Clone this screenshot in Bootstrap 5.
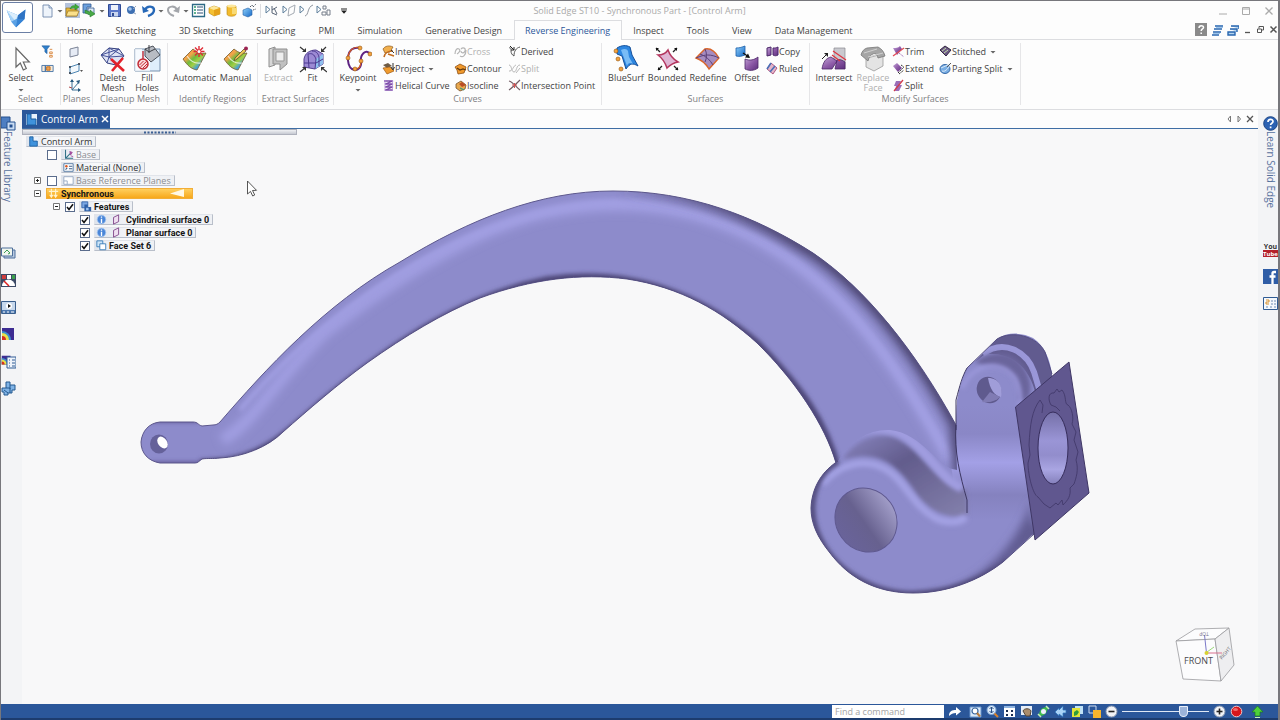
<!DOCTYPE html>
<html lang="en">
<head>
<meta charset="utf-8">
<meta name="viewport" content="width=device-width, initial-scale=1">
<title>Solid Edge ST10 - Synchronous Part - [Control Arm]</title>
<link href="https://cdn.jsdelivr.net/npm/bootstrap@5.3.0/dist/css/bootstrap.min.css" rel="stylesheet">
<style>
:root{--blue:#2b579a;--ink:#444;--line:#dcdde0}
body{font-family:"Open Sans","Noto Sans",sans-serif;font-size:9px;line-height:10px;color:var(--ink);background:#fdfdfd;border:1px solid #77777c;border-right-width:2px;border-bottom:0}
button{background:none;border:0;padding:0;color:inherit;font:inherit}
svg{display:block;flex:none}
a{color:inherit;text-decoration:none}
.s6{width:6px;height:6px}.s11{width:11px;height:11px}.s13{width:13px;height:13px}.s15{width:15px;height:15px}.s28{width:28px;height:28px}
.applogo{left:1px;top:1px;width:31px;height:31px;border:1px solid #6b7fa5;border-radius:3px;background:#fff}
.titlerow{display:grid;grid-template-columns:1fr auto 1fr;height:19px}
.qat{padding-left:39px;gap:2px}
.qat .on{background:#b4c3dc}
.vsep{width:1px;height:14px;background:var(--line);margin:0 2px 0 1px}
.caption{color:#aaa}
.winctl{color:#aaa;gap:9px}
.tabs{height:20px;padding-left:55px;border-bottom:1px solid var(--line)}
.tabs .nav-link{color:var(--ink);padding:0 12px 0 11px;height:20px;line-height:21px}
.tabs .nav-link.active{color:var(--blue);background:#fdfdfd;border:1px solid var(--line);border-bottom:0;padding:0 11px 0 10px;line-height:20px}
.ribbon{height:70px;padding:3px 0;border-bottom:1px solid var(--line)}
.grp{border-right:1px solid #e6e6e8;height:62px}
.grpbody{height:51px}
.grpname{color:#808083;text-align:center}
.big{padding-top:2px;white-space:nowrap}
.row17{height:17px;white-space:nowrap}
.off{color:#b0b0b0}
.w30{width:30px}.w34{width:34px}.w38{width:38px}.w40{width:40px}.w42{width:42px}.w44{width:44px}
.g60{width:60px}.g32{width:32px}.g75{width:75px}.g90{width:90px}.g76{width:76px}.g268{width:268px}.g208{width:208px}.g211{width:211px}
.c72{width:72px}.c54{width:54px}.c47{width:47px}
.side{width:21px;background:#f3f4f6;padding-top:6px}
.side.right{width:20px}
.side .vert{writing-mode:vertical-rl;font-size:10px;line-height:13px;color:#56709c}
.side .lead-item{margin-bottom:44px}
.side.right .lead-item{margin-bottom:34px}
.tools{gap:12px}
.doctabs{height:19px;border-bottom:1px solid #3f6ea5;background:#fdfdfd}
.doctab{background:var(--blue);color:#fff;width:88px;font-size:10px;padding:0 3px;gap:3px;white-space:nowrap}
.view{background:#f8f8f9}
.grip{width:275px;height:6px;border:1px solid #aeb1bc;background:linear-gradient(#f0f1f4,#c6c9d2)}
.tree{padding-left:4px}
.trow{height:13px}
.node{height:11px;border:1px solid #b9bfca;border-left-color:#e1e4ea;border-top-color:#e1e4ea;background:linear-gradient(90deg,#dfe4ec,#f8f9fb 40%,#eef0f4);padding:0 3px 0 1px;gap:2px;color:#333}
.node.dim{color:#8b8d92}
.node.strong{font-family:Roboto,"Open Sans",sans-serif;font-weight:700;color:#151515}
.node.sync{width:147px;background:linear-gradient(#ffcf5e,#f7a81b);border-color:#f2ae37}
.node.two{gap:4px}
.i1{margin-left:21px}.i2{margin-left:35px}.i3{margin-left:8px}.i4{margin-left:27px}.i5{margin-left:54px}
.tree input[type=checkbox]{appearance:none;width:10px;height:10px;border:1px solid #5a6c8c;background:#fff;margin:0 4px 0 0;border-radius:0}
.tree input[type=checkbox]:checked{background:#fff url("data:image/svg+xml,%3Csvg xmlns='http://www.w3.org/2000/svg' viewBox='0 0 8 8'%3E%3Cpath d='M1 4l2 2.4L7 1.2' fill='none' stroke='%23111' stroke-width='1.6'/%3E%3C/svg%3E") center/8px}
.pm{width:7px;height:7px;margin-right:6px}
.pm.near{margin-right:5px}
.status{height:16px;background:var(--blue);border-bottom:2px solid #1d3c6e;gap:4px;padding-right:14px}
.find{width:112px;height:13px;border:0;padding:0 3px;font:inherit;color:#333;background:#fff}
.find::placeholder{color:#a5a5a5;opacity:1}
.zoomer{appearance:none;width:87px;height:12px;margin:0;background:linear-gradient(#dfe8f5,#dfe8f5) center/100% 1px no-repeat}
.zoomer::-webkit-slider-thumb{appearance:none;width:9px;height:11px;background:#9cb4da;border:1px solid #e9effa;border-radius:1px 1px 5px 5px}
</style>
</head>
<body class="vh-100 d-flex flex-column overflow-hidden">

<svg width="0" height="0" class="position-absolute" aria-hidden="true">
<defs>
<linearGradient id="purp" x1="0" y1="0" x2="1" y2="1"><stop offset="0" stop-color="#c3a6d6"/><stop offset=".5" stop-color="#8e5ba8"/><stop offset="1" stop-color="#5d2f7d"/></linearGradient>
<linearGradient id="rain" x1="0" y1="0" x2="1" y2="1"><stop offset="0" stop-color="#f59a3c"/><stop offset=".3" stop-color="#f2a34a"/><stop offset=".45" stop-color="#6dbb3e"/><stop offset=".6" stop-color="#a5cf45"/><stop offset=".75" stop-color="#3f9fe0"/><stop offset="1" stop-color="#7db7ec"/></linearGradient>
<linearGradient id="bl" x1="0" y1="0" x2="1" y2="1"><stop offset="0" stop-color="#8fd0fa"/><stop offset="1" stop-color="#1668c6"/></linearGradient>
<symbol id="car" viewBox="0 0 6 6"><path d="M.5 2h5L3 4.6z" fill="#666"/></symbol>
<symbol id="new" viewBox="0 0 15 15"><path d="M3 2h6l3 3v9H3z" fill="#eef4fb" stroke="#7089ac" stroke-width=".9"/><path d="M9 2v3h3" fill="#cfdded" stroke="#7089ac" stroke-width=".8"/></symbol>
<symbol id="open" viewBox="0 0 15 15"><path d="M1 5h4l1 1h6v7H1z" fill="#e3b53b" stroke="#9a7421" stroke-width=".7"/><path d="M3 8h11l-2 5H1z" fill="#fbe08a" stroke="#9a7421" stroke-width=".7"/><path d="M5 6c1-3 3-4 5-3V1l4 3-4 3V5c-2-.4-3 0-5 1z" fill="#3fae3a" stroke="#1e7d21" stroke-width=".5"/></symbol>
<symbol id="arrowbox" viewBox="0 0 15 15"><path d="M1 1h8v3H5v6H1z" fill="#6fa2de" stroke="#31588f" stroke-width=".8"/><path d="M6 5h6v6H6z" fill="#dfeaf7" stroke="#31588f" stroke-width=".8"/><path d="M3 7l5 2V7l5 4-5 3v-2l-5-2z" fill="#49a947" stroke="#207523" stroke-width=".5"/></symbol>
<symbol id="save" viewBox="0 0 15 15"><path d="M1.500 1.500h12v12h-12z" fill="#5a77c9" stroke="#2f4b94"/><path d="M4 2h7v5H4z" fill="#eef2fa"/><path d="M4 9h7v4.500H4z" fill="#c9d5ee"/><path d="M5 10h2v3H5z" fill="#2f4b94"/></symbol>
<symbol id="ball" viewBox="0 0 15 15"><circle cx="7" cy="7" r="4" fill="#3d6fb2"/><circle cx="6" cy="6" r="1.800" fill="#a4c5ec"/><path d="M9 6l3-3M10 10l2 1" stroke="#96a5bb"/></symbol>
<symbol id="undo" viewBox="0 0 15 15"><path d="M4 7c2-5 9-4 9 0 0 3-3 5-6 6" fill="none" stroke="#2668b8" stroke-width="2.400"/><path d="M1 3l1 7 6-2z" fill="#2668b8"/></symbol>
<symbol id="redo" viewBox="0 0 15 15"><path d="M11 7C9 2 2 3 2 7c0 3 3 5 6 6" fill="none" stroke="#a3a6ab" stroke-width="2"/><path d="M14 3l-1 7-6-2z" fill="#a3a6ab"/></symbol>
<symbol id="list" viewBox="0 0 15 15"><path d="M1.500 1.500h12v12h-12z" fill="#fff" stroke="#2d6a86" stroke-width="1.300"/><path d="M3 4h2M3 7h2M3 10h2" stroke="#2d9c6c" stroke-width="1.600"/><path d="M6 4h6M6 7h6M6 10h6" stroke="#2b4e74"/></symbol>
<symbol id="box" viewBox="0 0 15 15"><path d="M1 5l5-2 6 2v6l-6 2-5-3z" fill="#f4c033" stroke="#b78412" stroke-width=".6"/><path d="M1 5l5-2 6 2-6 2z" fill="#fde79b"/><path d="M6 7v6l6-2V5z" fill="#e5a21a"/></symbol>
<symbol id="cyl" viewBox="0 0 15 15"><path d="M2 3h9v8c0 3-9 3-9 0z" fill="#f3bb2d" stroke="#b78412" stroke-width=".6"/><ellipse cx="6.500" cy="3" rx="4.500" ry="1.600" fill="#fde79b"/><path d="M7 5h5v6H7z" fill="#f8da75"/></symbol>
<symbol id="bluebox" viewBox="0 0 15 15"><path d="M1 7l5-2 4 2v5l-4 2-5-2z" fill="url(#bl)" stroke="#2a62a4" stroke-width=".6"/><path d="M8 4l2-2 1 2 3-3M11 7l3-1" stroke="#555d68" fill="none" stroke-dasharray="1.500 1"/></symbol>
<symbol id="tr" viewBox="0 0 15 15"><path d="M1 3v7l4-3.500z" fill="none" stroke="#5d7f9b"/></symbol>
<symbol id="q1" viewBox="0 0 15 15"><use href="#tr"/><path d="M7 3v7l5 2M7 7l5-3M9 5l3 6" fill="none" stroke="#596577"/></symbol>
<symbol id="q2" viewBox="0 0 15 15"><use href="#tr"/><path d="M7 5l6-3-1 8-6 3z" fill="none" stroke="#a4aab2"/></symbol>
<symbol id="q3" viewBox="0 0 15 15"><use href="#tr"/><path d="M6 13c4-1 2-9 8-11" fill="none" stroke="#8d939c"/></symbol>
<symbol id="q4" viewBox="0 0 15 15"><use href="#tr"/><path d="M7 3h3v3H7zM6 9h4v3H6zM11 7h3v5h-3z" fill="none" stroke="#777f8b"/></symbol>
<symbol id="qm" viewBox="0 0 6 6"><path d="M0 .5h6v1H0zM0 2.500h6L3 5.800z" fill="#222"/></symbol>
<symbol id="cursor" viewBox="0 0 28 28"><path d="M9 3v19l4.300-4 3 7 3-1.500-3-6.500h6z" fill="#fff" stroke="#666" stroke-width="1.200"/></symbol>
<symbol id="filter" viewBox="0 0 15 15"><path d="M1 1h9L7 5v5L4.500 8V5z" fill="#2f80cc" stroke="#1d5593" stroke-width=".6"/><path d="M10 5h3M10 8h3v2h-3zM10 12h3v2h-3z" stroke="#d88134" fill="none"/></symbol>
<symbol id="selbox" viewBox="0 0 15 15"><path d="M1 4h4v7H1zM5 4h9v7H5z" fill="#f8ead9" stroke="#3c6da3"/><path d="M6.500 5.500h4v4h-4z" fill="#f3a252" stroke="#b96918"/></symbol>
<symbol id="pl1" viewBox="0 0 15 15"><path d="M1 5l8-2v8l-8 2z" fill="#e6ebf5" stroke="#7b8396"/></symbol>
<symbol id="pl2" viewBox="0 0 15 15"><path d="M1 6l9-3v7l-9 3z" fill="#f3f8fc" stroke="#4c86b4"/><path d="M0 5h2v2H0zM0 11h2v2H0zM9 2h2v2H9z" fill="#4c5664"/><path d="M11 9h3l-1.500 2z" fill="#555"/></symbol>
<symbol id="pl3" viewBox="0 0 15 15"><path d="M3 2v10h8M3 12l7-8" fill="none" stroke="#3c7196"/><path d="M1 4l2-3 2 3zM9 10l3 2-3 2zM7 3l4-1-1 4z" fill="#28597e"/><path d="M0 9l3 1" stroke="#b04848"/></symbol>
<symbol id="del" viewBox="0 0 28 28"><path d="M2 10l8-7 10 1 5 7-8 9-9-2z" fill="#dfe4f5" stroke="#34407c"/><path d="M2 10l8 2 10-8M10 3v9l7 8M10 12l15-1M8 18l2-6M2 10l18-6M25 11l-15-8" fill="none" stroke="#46539a"/><path d="M12 14l13 12M24 13L13 26" stroke="#e3222b" stroke-width="2.600"/></symbol>
<symbol id="fill" viewBox="0 0 28 28"><path d="M2 4h25v22H2z" fill="#dfeefc" stroke="#7691ae"/><path d="M2 4h7v9h8v13H2z" fill="#fff" opacity=".7"/><path d="M12 4l8-3 7 9-9 7-6-6z" fill="#b8bcc3" stroke="#4e535c"/><path d="M12 4l4 3 6-3M16 0v8" fill="none" stroke="#3c3f45"/><path d="M10 6v11" stroke="#c22b35" stroke-width="1.400"/><circle cx="10" cy="19" r="5" fill="#fbdadb" stroke="#c22b35" stroke-width="1.500"/><path d="M6.500 20l4-4M7.500 22l6-5.500M10 23l4-4" stroke="#c22b35"/></symbol>
<symbol id="patch" viewBox="0 0 28 28"><path d="M2 14L12 4c5 4 8 5 13 4l-9 17C10 24 6 20 2 14z" fill="url(#rain)" stroke="#715c2e" stroke-width=".8"/><path d="M6 11c4 6 8 8 14 7" stroke="#fff" stroke-width="1.200" fill="none" opacity=".7"/></symbol>
<symbol id="auto" viewBox="0 0 28 28"><use href="#patch"/><path d="M18 1v11M12.500 6.500h11M14 2.500l8 8M22 2.500l-8 8" stroke="#df2b35" stroke-width="1.400"/><circle cx="18" cy="6.500" r="1.500" fill="#fff"/></symbol>
<symbol id="man" viewBox="0 0 28 28"><use href="#patch"/><path d="M13 13l9-9 2 2-9 8-3 2z" fill="#ecc554" stroke="#635230" stroke-width=".8"/><circle cx="24" cy="3.500" r="2" fill="#9c2352"/></symbol>
<symbol id="ext" viewBox="0 0 28 28"><path d="M4 4l6-2v18l-6 2z" fill="#d7d7d7" stroke="#8f8f8f"/><path d="M8 4h14v15l-7 6v-6H8z" fill="#c1c1c1" stroke="#8f8f8f"/><path d="M11 7h8v9h-8z" fill="#eee" stroke="#999"/></symbol>
<symbol id="fit" viewBox="0 0 28 28"><path d="M5 14c1-6 6-9 12-9l7 4v10l-8 5-11-2z" fill="#9c8ad4" stroke="#53408f"/><path d="M17 14l7-5v10l-8 5z" fill="#8fc0ee"/><path d="M9 9c4-1 6 0 8 5l-1 10M13 6c4 0 6 2 7 6v9M5 18h12l7-4M9 9l1 14" stroke="#4b3990" fill="none"/><path d="M1 2l5 4M27 2l-4 4M1 27l5-4M28 27l-5-4" stroke="#333" stroke-width="1.200"/><path d="M7 7H3l4-4zM22 7h4l-4-4zM7 22v4l-4-4zM22 22v4l4-4z" fill="#333"/></symbol>
<symbol id="key" viewBox="0 0 28 28"><path d="M16 3C1 0 2 21 8 24s10-2 9-8 5-13 9-7" fill="none" stroke="#5e2383" stroke-width="2"/><path d="M17 3C9 0 4 7 4 14M9 24c6 1 8-3 8-8" stroke="#d15b22" stroke-width="1.200" fill="none"/><g fill="#f3a13c" stroke="#915412" stroke-width=".6"><circle cx="16" cy="3" r="2"/><circle cx="4" cy="13" r="2"/><circle cx="11" cy="24" r="2"/><circle cx="17" cy="16" r="2"/><circle cx="26" cy="9" r="2"/></g></symbol>
<symbol id="s-int" viewBox="0 0 13 13"><path d="M1 4c2-3 6-4 10-2L8 7 3 8z" fill="#f2b04e" stroke="#8b581a" stroke-width=".7"/><path d="M2 12c1-5 4-6 9-6M6 9l6 2" fill="none" stroke="#c26b1e" stroke-width="1.600"/><path d="M9 5l3 3" stroke="#333"/></symbol>
<symbol id="s-proj" viewBox="0 0 13 13"><path d="M1 3l5-2 4 3-5 2z" fill="#6f5c46"/><path d="M1 6l7-1 4 4-7 3z" fill="#f09b2e" stroke="#9b5713" stroke-width=".7"/><path d="M11 1v6M9 5l2 3 1.500-3" stroke="#333" fill="none"/></symbol>
<symbol id="s-hel" viewBox="0 0 13 13"><path d="M2 2h9L3 5h8L3 8h8l-8 3h8" fill="none" stroke="#7c4bab" stroke-width="1.300"/><path d="M3 1v11M10.500 1v11" stroke="#b490d6" stroke-width=".8"/></symbol>
<symbol id="s-cross" viewBox="0 0 13 13"><path d="M1 9c0-4 2-6 4-5s0 4-2 5M7 4c2-2 5-1 4 2s-4 2-4 0M6 11c3 2 6-1 6-6" fill="none" stroke="#b5b5b5" stroke-width="1.200"/></symbol>
<symbol id="s-con" viewBox="0 0 13 13"><path d="M1 5l5-3 6 3-2 6-6 1-1-4z" fill="#f0992c" stroke="#8f4f13" stroke-width=".8"/><path d="M3 6l3 2 3-1 3 1" stroke="#5e3812" fill="none" stroke-width="1.300"/></symbol>
<symbol id="s-iso" viewBox="0 0 13 13"><path d="M2 5l5-3 5 4-1 4-5 2-4-3z" fill="#e8a94e" stroke="#77502a" stroke-width=".8"/><path d="M5 5l3-2 4 3-4 2z" fill="#b94e25"/><path d="M6 9l4 2" stroke="#3a9f7b" stroke-width="1.300"/></symbol>
<symbol id="s-der" viewBox="0 0 13 13"><path d="M1 3c2-1 2 1 2 3s1 4 3 5c0-5 2-8 6-9" fill="none" stroke="#555"/><path d="M2 1l4 4M6 2v3H3" stroke="#222" fill="none"/></symbol>
<symbol id="s-spl" viewBox="0 0 13 13"><path d="M1 3c3 0 2 7 5 7s2-7 6-7M1 9c3 1 5-6 7-6M8 11l4-5" fill="none" stroke="#b8b8b8"/></symbol>
<symbol id="s-ip" viewBox="0 0 13 13"><path d="M1 11C4 9 8 5 12 1M1 2c4 1 6 5 11 9" fill="none" stroke="#735e66" stroke-width="1.200"/><path d="M4 6h5M6.500 4v5" stroke="#d65252"/></symbol>
<symbol id="blue" viewBox="0 0 28 28"><path d="M5 3c5-3 9-3 13-1l2 8 6 11c-5-3-8-3-12 3l-4-13-5-2z" fill="#2d86e0" stroke="#15509b"/><path d="M9 5c4-2 6-1 7 1l1 6 4 7c-3-2-5-1-6 2z" fill="#79bcf6"/><g fill="#f3a13c" stroke="#915412" stroke-width=".6"><circle cx="4" cy="6" r="2"/><circle cx="6" cy="14" r="2"/><circle cx="9" cy="24" r="2"/></g></symbol>
<symbol id="bound" viewBox="0 0 28 28"><path d="M5 10c5 0 8-2 10-5 2 6 5 9 10 12-5 1-8 3-11 6C12 17 9 13 5 10z" fill="#dfb5d4" stroke="#b3355e" stroke-width="1.500"/><path d="M3 3l4 4M20 7l4-4M9 21l-4 4M21 21l4 4" stroke="#222" stroke-width="1.300"/><path d="M3 3h3l-3 3zM24 3v3l-3-3zM5 25v-3l3 3zM25 25h-3l3-3z" fill="#111"/></symbol>
<symbol id="redef" viewBox="0 0 28 28"><path d="M2 13L11 4c5-1 10 2 14 9L15 24C12 19 8 15 2 13z" fill="#a68cc0" stroke="#d9652a" stroke-width="1.400"/><path d="M6 9c6 2 10 6 13 11M11 4c2 4 2 9 0 13M2 13c9-4 15-4 23 0" stroke="#5c4178" fill="none"/></symbol>
<symbol id="offs" viewBox="0 0 28 28"><path d="M3 3c4 0 6-1 9-2v9c-3 1-5 2-9 1z" fill="url(#bl)" stroke="#1c5ea8" stroke-width=".8"/><path d="M12 14c5 2 9 1 13-2v11c-4 3-9 3-13 1z" fill="url(#purp)" stroke="#4b2768" stroke-width=".8"/><path d="M10 8l6 4" stroke="#111" stroke-width="1.400"/><path d="M17 13l-5-.5 3-4z" fill="#111"/></symbol>
<symbol id="s-copy" viewBox="0 0 13 13"><path d="M1 3l4-1v8l-4 1zM7 3c2 0 3 0 5-1v8c-2 1-3 1-5 0z" fill="url(#purp)" stroke="#4b2768"/></symbol>
<symbol id="s-rul" viewBox="0 0 13 13"><path d="M5 1l6 5-4 6-6-5z" fill="#e4b5c9" stroke="#a03a6a" stroke-width=".8"/><path d="M1 7l4-6M4 10l5-6" stroke="#4b6fb6" stroke-width="1.600"/></symbol>
<symbol id="inter" viewBox="0 0 28 28"><path d="M14 3h11v21l-11-8z" fill="#c9c9cf" stroke="#86868c" stroke-width=".7"/><path d="M2 24c1-7 4-11 9-12l6 4-5 8zM15 24l2-9c3-1 5 0 8 2v7z" fill="url(#purp)" stroke="#4b2768" stroke-width=".8"/><path d="M13 6l13 9M12 10l8 6" stroke="#df3340" stroke-width="1.200"/><path d="M2 14l5-5" stroke="#222"/><path d="M4 8h4v4z" fill="#222"/></symbol>
<symbol id="repl" viewBox="0 0 28 28"><path d="M12 12l12-3v12l-9 5-8-4v-8z" fill="#e4e4e4" stroke="#999" stroke-width=".8"/><path d="M2 10c1-4 3-6 6-7l11-1c4 2 6 5 7 9l-7 2c-1-4-3-5-5-4-3 1-4 3-5 7z" fill="#a5a5a5" stroke="#777" stroke-width=".8"/><path d="M5 8L18 4M9 12L24 8" stroke="#d0d0d0"/></symbol>
<symbol id="s-trim" viewBox="0 0 13 13"><path d="M1 3c3 0 5 0 7-2l2 3-5 6z" fill="url(#purp)"/><path d="M1 11L12 3" stroke="#e04a57" stroke-width="1.300"/><path d="M7 8l5 4" stroke="#a77ac0" stroke-dasharray="2 1"/></symbol>
<symbol id="s-extend" viewBox="0 0 13 13"><path d="M1 4l4-3 5 5-4 4z" fill="url(#purp)"/><path d="M6 11l6-6M7 12l5-4M9 3l3 2" stroke="#333" stroke-dasharray="2 1"/></symbol>
<symbol id="s-sp2" viewBox="0 0 13 13"><path d="M4 2h5L7 6h3l-3 6H3l1-5H2z" fill="#9a6db8"/><path d="M2 12L11 1" stroke="#d33a48" stroke-width="1.200"/></symbol>
<symbol id="s-sti" viewBox="0 0 13 13"><path d="M1 5l5-4 6 4-5 6z" fill="#6d5a86" stroke="#33283f"/><path d="M3 6l4-3M5 8l4-3" stroke="#c4e0a8"/></symbol>
<symbol id="s-par" viewBox="0 0 13 13"><ellipse cx="6" cy="7" rx="5" ry="4.500" fill="#79aee4" stroke="#376aa8"/><path d="M2 6l9-4M3 9c3 1 5-1 8-6" stroke="#d9e9f8" fill="none"/><path d="M8 5l4-4" stroke="#555"/></symbol>
<!-- docking strips -->
<symbol id="lib" viewBox="0 0 15 15"><path d="M0 1h9v11H0z" fill="#4d7ec2" stroke="#24508f"/><path d="M6 6h8v8H6z" fill="#c9dcf3" stroke="#24508f"/><path d="M8.500 8.500h3v3h-3z" fill="#24508f"/></symbol>
<symbol id="l2" viewBox="0 0 15 15"><path d="M3 4h11v8H3z" fill="#b9cae2" stroke="#4d6f9b"/><path d="M.5 2h11v8H.5z" fill="#eff5ee" stroke="#4d6f9b"/><path d="M3 7l3-3 3 3-2 1" stroke="#3c9c54" fill="none"/></symbol>
<symbol id="l3" viewBox="0 0 15 15"><path d="M0 1h15v13H0z" fill="#3c4a66"/><path d="M1 2h4v4H1z" fill="#cf3d3d"/><path d="M6 2h4v4H6z" fill="#fff"/><path d="M11 2h3v4h-3z" fill="#3aa04c"/><path d="M1 13a6.500 6.500 0 0 1 13 0z" fill="#fff"/><path d="M8 13L3 8" stroke="#d22" stroke-width="1.500"/></symbol>
<symbol id="l4" viewBox="0 0 15 15"><path d="M.5 1.500h14v12H.5z" fill="#c7d8ec" stroke="#3a5f8d"/><path d="M1 10h13v3H1z" fill="#4b77ae"/><path d="M2 12h2M6 12h2M10 12h3" stroke="#fff"/><circle cx="8" cy="6" r="3" fill="#fff"/><path d="M7 4l3 2-3 2z" fill="#111"/></symbol>
<symbol id="l5" viewBox="0 0 15 15"><path d="M1 1h12v12H1z" fill="#3d2c92"/><path d="M1 4a9 9 0 0 1 9 9H1z" fill="#3c8fd1"/><path d="M1 6a7 7 0 0 1 7 7H1z" fill="#e8e04a"/><path d="M1 9a4 4 0 0 1 4 4H1z" fill="#d62d20"/></symbol>
<symbol id="l6" viewBox="0 0 15 15"><use href="#l5" width="11" height="13"/><path d="M6 3h9v11H6z" fill="#eef3fa" stroke="#315c95"/><path d="M8 6h1M8 9h1M8 12h1M11 6h3M11 9h3M11 12h3" stroke="#315c95"/></symbol>
<symbol id="l7" viewBox="0 0 15 15"><path d="M5 1h4v3h5v5h-3v3H7v2H3v-3H1V7h4z" fill="#7fb3e6" stroke="#24588f"/><path d="M5 7h4v5M9 4v4M3 9l4 3" fill="none" stroke="#24588f"/></symbol>
<symbol id="help" viewBox="0 0 15 15"><circle cx="7.500" cy="7.500" r="6.800" fill="#2c62b3" stroke="#1c4585"/><path d="M5 6c0-3.500 5-3.500 5-.5 0 1.700-2.400 1.800-2.400 3.500M7.600 10.600v1.600" stroke="#fff" stroke-width="1.700" fill="none"/></symbol>
<symbol id="fb" viewBox="0 0 15 15"><path d="M0 0h15v15H0z" fill="#2f5da6"/><path d="M13 3h-2c-1 0-1.500.5-1.500 1.500V15M6.500 7.500h6" stroke="#fff" stroke-width="2.300" fill="none"/></symbol>
<symbol id="cardi" viewBox="0 0 15 15"><path d="M.5 1.500h14v12H.5z" fill="#f4f8fc" stroke="#2f5b93"/><path d="M3 4h3v2H3v2h3" stroke="#d9912a" fill="none"/><path d="M8 5h2M11 5h2M8 8h2M11 8h2M3 11h2M7 11h2M11 11h2" stroke="#6e8db4"/></symbol>
<symbol id="part" viewBox="0 0 13 13"><path d="M1 1h11v11H1z" fill="#eaf3fd"/><path d="M2 1h4v5h5v6H2z" fill="#3f92dc" stroke="#1d5c9e"/></symbol>
<symbol id="t-base" viewBox="0 0 13 13"><path d="M3 1v10h9M3 11l6-6" stroke="#2f6f86" fill="none" stroke-width="1.200"/><path d="M8 3l3 1-2 3zM9 8l3 1" fill="#a44a9c" stroke="#a44a9c"/></symbol>
<symbol id="t-mat" viewBox="0 0 13 13"><path d="M1 2h11v9H1z" fill="#fff" stroke="#47709d"/><circle cx="4" cy="5" r="1.500" fill="#df5a22"/><path d="M3 9l2-2M7 5h4M7 8h4" stroke="#3c5c86" stroke-width="1.300"/></symbol>
<symbol id="t-pl" viewBox="0 0 13 13"><path d="M1 2h11v9H1z" fill="#fff" stroke="#8fa3be"/><path d="M1 7h4v4" fill="none" stroke="#8fa3be"/></symbol>
<symbol id="t-sync" viewBox="0 0 13 13"><path d="M4 1v9M9 1v9M2 8l2 3 2-3M7 8l2 3 2-3M1 4h11" stroke="#fff3d0" fill="none" stroke-width="1.300"/></symbol>
<symbol id="t-feat" viewBox="0 0 13 13"><path d="M1 1h7v7H1z" fill="#7ba7e2" stroke="#2e5fa6"/><path d="M4 4h4v3h4v5H4z" fill="#2e5fa6"/><path d="M6 8h3v3H6z" fill="#9cc2f0"/></symbol>
<symbol id="t-info" viewBox="0 0 13 13"><circle cx="6.500" cy="6.500" r="5" fill="#4a86d8" stroke="#9cc1ef"/><path d="M6.500 3v1.500M6.500 5.500v5" stroke="#fff" stroke-width="1.600"/></symbol>
<symbol id="t-surf" viewBox="0 0 13 13"><path d="M3 4l6-3v8l-6 3z" fill="#efdff1" stroke="#793a83"/></symbol>
<symbol id="t-set" viewBox="0 0 13 13"><path d="M1 1h7v7H1z" fill="#cde5f8" stroke="#2f77b5"/><path d="M4.500 4.500h7v7h-7z" fill="#fff" stroke="#2f77b5"/></symbol>
<symbol id="plus" viewBox="0 0 7 7"><path d="M.5 .5h6v6h-6z" fill="#fff" stroke="#777"/><path d="M2 3.500h3M3.500 2v3" stroke="#222"/></symbol>
<symbol id="minus" viewBox="0 0 7 7"><path d="M.5 .5h6v6h-6z" fill="#fff" stroke="#777"/><path d="M2 3.500h3" stroke="#222"/></symbol>
<!-- status bar -->
<symbol id="b1" viewBox="0 0 13 13"><path d="M1 11c0-5 3-6 7-6V2l5 4.500-5 4V8C5 8 3 9 1 11z" fill="#fff"/></symbol>
<symbol id="b2" viewBox="0 0 13 13"><path d="M1 2h11v10H1z" fill="#dcebfa" stroke="#6b96cc"/><circle cx="6" cy="6" r="3" fill="#fff" stroke="#39669e" stroke-width="1.200"/><path d="M8 8l3 3.500" stroke="#b97a3a" stroke-width="2"/></symbol>
<symbol id="b3" viewBox="0 0 13 13"><circle cx="5.500" cy="5" r="4.500" fill="#dcebfa" stroke="#7fa7d6"/><path d="M5.500 2v6M3.500 4l2-2 2 2M3.500 6l2 2 2-2" stroke="#274f86" fill="none"/><path d="M8.500 8.500L12 12" stroke="#d9822b" stroke-width="2"/></symbol>
<symbol id="b4" viewBox="0 0 13 13"><path d="M1 1h11v11H1z" fill="#fff"/><path d="M3 5l2 2M5 5L3 7M8 5l2 2M10 5L8 7M3 9l2 2M5 9l-2 2M8 9l2 2M10 9l-2 2" stroke="#1b2f52" fill="none"/><path d="M1 2h11" stroke="#8fb4e0" stroke-width="2"/></symbol>
<symbol id="b5" viewBox="0 0 13 13"><path d="M1 1h11v9H1z" fill="#e6edf6"/><path d="M3 6c1-3 7-3 8 0l-1 5H6z" fill="#a98c6c" stroke="#54473a"/></symbol>
<symbol id="b6" viewBox="0 0 13 13"><path d="M2 11c0-6 3-9 9-9-1 6-3 9-9 9z" fill="#3fbe4e"/><circle cx="6.500" cy="6.500" r="2.500" fill="#eef"/><path d="M9 1l3 3M1 9l3 3" stroke="#c7f2b8" stroke-width="1.500"/></symbol>
<symbol id="b7" viewBox="0 0 13 13"><path d="M1 7l4-4v2l4-4v4h3v3H9v4L5 9v2z" fill="#a9d3f7" stroke="#2d73b9" stroke-width=".7"/></symbol>
<symbol id="b8" viewBox="0 0 13 13"><path d="M4 1h8v8H4z" fill="#bfe1f6"/><path d="M1 3h8v9H1z" fill="#e4e43a"/><path d="M3 7l3-2 2 2-2 3-3 1z" fill="#2f9c3b"/></symbol>
<symbol id="b9" viewBox="0 0 13 13"><path d="M1 1h7v7H1z" fill="none" stroke="#cfdcf0"/><path d="M5 5h8v8H5z" fill="#f6b42c"/></symbol>
<symbol id="zo" viewBox="0 0 13 13"><circle cx="6.500" cy="6.500" r="5.500" fill="#f1f3f7" stroke="#8c99b0"/><path d="M3.500 6.500h6" stroke="#222" stroke-width="1.600"/></symbol>
<symbol id="zi" viewBox="0 0 13 13"><use href="#zo"/><path d="M6.500 3.500v6" stroke="#222" stroke-width="1.600"/></symbol>
<symbol id="rec" viewBox="0 0 13 13"><circle cx="6.500" cy="6.500" r="5.300" fill="#d8161c" stroke="#f1c7c9"/><ellipse cx="5.500" cy="4.500" rx="2.500" ry="1.500" fill="#f06a6c"/></symbol>
<symbol id="up" viewBox="0 0 13 13"><path d="M6.500 1l5.500 6H9v4H4V7H1z" fill="#4fd13a" stroke="#1b7c1e" stroke-width=".7"/><path d="M4 12.500h5" stroke="#c9f3bd"/></symbol>
</defs>
</svg>

<header class="position-relative flex-shrink-0">
  <button class="applogo position-absolute z-1" aria-label="Application menu"><svg viewBox="0 0 31 31" width="29" height="29"><path d="M4 8l12 5 8-6-1 10-9 9-5-6z" fill="#4a94e0"/><path d="M4 8l12 5-2 13-5-6z" fill="#a5d2f7"/><path d="M16 13l8-6-1 10-9 9z" fill="#2f74c4"/><path d="M4 8l12 5-3 6z" fill="#dceefc"/><path d="M9 20l5-3 9 0-9 9z" fill="#3b8bdd" opacity=".7"/></svg></button>
  <div class="titlerow">
    <div class="qat d-flex align-items-center">
      <button aria-label="New"><svg class="s15"><use href="#new"/></svg></button><button aria-label="New options"><svg class="s6"><use href="#car"/></svg></button>
      <button class="on" aria-label="Open"><svg class="s15"><use href="#open"/></svg></button><button aria-label="Switch"><svg class="s15"><use href="#arrowbox"/></svg></button><button aria-label="Switch options"><svg class="s6"><use href="#car"/></svg></button>
      <button aria-label="Save"><svg class="s15"><use href="#save"/></svg></button><button aria-label="Orbit"><svg class="s15"><use href="#ball"/></svg></button><button aria-label="Undo"><svg class="s15"><use href="#undo"/></svg></button><button aria-label="Undo list"><svg class="s6"><use href="#car"/></svg></button>
      <button aria-label="Redo"><svg class="s15"><use href="#redo"/></svg></button><button aria-label="Redo list"><svg class="s6"><use href="#car"/></svg></button>
      <button aria-label="Options"><svg class="s15"><use href="#list"/></svg></button><button aria-label="Box"><svg class="s15"><use href="#box"/></svg></button><button aria-label="Cylinder"><svg class="s15"><use href="#cyl"/></svg></button><button aria-label="Explode"><svg class="s15"><use href="#bluebox"/></svg></button>
      <span class="vsep"></span>
      <button aria-label="Select vertex"><svg class="s15"><use href="#q1"/></svg></button><button aria-label="Select face"><svg class="s15"><use href="#q2"/></svg></button><button aria-label="Select curve"><svg class="s15"><use href="#q3"/></svg></button><button aria-label="Select parts"><svg class="s15"><use href="#q4"/></svg></button>
      <button class="ms-2" aria-label="Customize toolbar"><svg class="s6"><use href="#qm"/></svg></button>
    </div>
    <div class="caption align-self-center">Solid Edge ST10 - Synchronous Part - [Control Arm]</div>
    <div class="winctl d-flex justify-content-end align-items-center pe-1">
      <button aria-label="Minimize"><svg width="10" height="10"><path d="M1 8h8" stroke="#aaa"/></svg></button>
      <button class="ms-1" aria-label="Maximize"><svg width="10" height="10"><path d="M1.500 1.500h7v7h-7zM1 3h8" fill="none" stroke="#aaa"/></svg></button>
      <button class="ms-1" aria-label="Close"><svg width="10" height="10"><path d="M1.500 1.500l7 7M8.500 1.500l-7 7" stroke="#aaa" stroke-width="1.300"/></svg></button>
    </div>
  </div>
  <nav class="tabs nav d-flex flex-nowrap text-nowrap">
    <a class="nav-link" href="#">Home</a><a class="nav-link" href="#">Sketching</a><a class="nav-link" href="#">3D Sketching</a><a class="nav-link" href="#">Surfacing</a><a class="nav-link" href="#">PMI</a><a class="nav-link" href="#">Simulation</a><a class="nav-link" href="#">Generative Design</a><a class="nav-link active" href="#" aria-current="page">Reverse Engineering</a><a class="nav-link" href="#">Inspect</a><a class="nav-link" href="#">Tools</a><a class="nav-link" href="#">View</a><a class="nav-link" href="#">Data Management</a>
    <div class="ms-auto d-flex align-items-center gap-1">
      <button aria-label="Help"><svg width="12" height="13" viewBox="0 0 12 13"><path d="M0 0h12v13H0z" fill="#8a8a8a"/><path d="M4 5c0-3 4.500-3 4.500-.5C8.500 6 6.200 6 6.200 8M6.200 9.500V11" stroke="#fff" stroke-width="1.500" fill="none"/></svg></button>
      <button aria-label="Cascade"><svg width="12" height="12"><path d="M4 2h8M3 5h8M2 8h8M1 11h7" stroke="#2766b0" stroke-width="1.500"/><path d="M5 3.500h7M2 9.500h7" stroke="#9cc4ea"/></svg></button>
      <button aria-label="Tile"><svg width="12" height="12"><path d="M4 2h8v3M3 5h7v3M1 8h7v3H1z" stroke="#2766b0" stroke-width="1.400" fill="#b5d4ef"/></svg></button>
      <button aria-label="Minimize document"><svg width="9" height="9"><path d="M2 7.500h5" stroke="#555" stroke-width="1.300"/></svg></button>
      <button aria-label="Restore document"><svg width="9" height="9"><path d="M1.500 4h4v3.500h-4zM3 3.500V1.500h4.500V5H6" fill="none" stroke="#555"/></svg></button>
      <button aria-label="Close document"><svg width="9" height="9"><path d="M1.500 1.500l6 6M7.500 1.500l-6 6" stroke="#555" stroke-width="1.500"/></svg></button>
    </div>
  </nav>
</header>

<section class="ribbon d-flex flex-shrink-0" aria-label="Reverse Engineering">
  <div class="grp g60"><div class="grpbody d-flex">
    <button class="big w40 d-flex flex-column align-items-center"><svg class="s28"><use href="#cursor"/></svg>Select<svg class="s6 mt-1"><use href="#car"/></svg></button>
    <div><button class="row17 d-flex align-items-center" aria-label="Filter"><svg class="s13"><use href="#filter"/></svg></button><button class="row17 d-flex align-items-center" aria-label="Box select"><svg class="s13"><use href="#selbox"/></svg></button></div>
  </div><div class="grpname">Select</div></div>
  <div class="grp g32"><div class="grpbody d-flex flex-column align-items-center">
    <button class="row17" aria-label="Coincident plane"><svg class="s15"><use href="#pl1"/></svg></button><button class="row17" aria-label="Plane by points"><svg class="s15"><use href="#pl2"/></svg></button><button class="row17" aria-label="Coordinate system"><svg class="s15"><use href="#pl3"/></svg></button>
  </div><div class="grpname">Planes</div></div>
  <div class="grp g75"><div class="grpbody d-flex justify-content-center">
    <button class="big w30 d-flex flex-column align-items-center me-1"><svg class="s28"><use href="#del"/></svg><span>Delete<br>Mesh</span></button>
    <button class="big w30 d-flex flex-column align-items-center"><svg class="s28"><use href="#fill"/></svg><span>Fill<br>Holes</span></button>
  </div><div class="grpname text-nowrap">Cleanup Mesh</div></div>
  <div class="grp g90"><div class="grpbody d-flex justify-content-center ps-1">
    <button class="big w42 d-flex flex-column align-items-center"><svg class="s28"><use href="#auto"/></svg>Automatic</button>
    <button class="big w40 d-flex flex-column align-items-center"><svg class="s28"><use href="#man"/></svg>Manual</button>
  </div><div class="grpname">Identify Regions</div></div>
  <div class="grp g76"><div class="grpbody d-flex justify-content-center">
    <button class="big w34 d-flex flex-column align-items-center off" disabled><svg class="s28"><use href="#ext"/></svg>Extract</button>
    <button class="big w34 d-flex flex-column align-items-center"><svg class="s28"><use href="#fit"/></svg>Fit</button>
  </div><div class="grpname">Extract Surfaces</div></div>
  <div class="grp g268"><div class="grpbody d-flex ps-1">
    <button class="big w40 d-flex flex-column align-items-center me-1"><svg class="s28"><use href="#key"/></svg>Keypoint<svg class="s6 mt-1"><use href="#car"/></svg></button>
    <div class="c72">
      <button class="row17 d-flex align-items-center"><svg class="s13"><use href="#s-int"/></svg>Intersection</button>
      <button class="row17 d-flex align-items-center"><svg class="s13"><use href="#s-proj"/></svg>Project<svg class="s6 ms-1"><use href="#car"/></svg></button>
      <button class="row17 d-flex align-items-center"><svg class="s13"><use href="#s-hel"/></svg>Helical Curve</button>
    </div>
    <div class="c54">
      <button class="row17 d-flex align-items-center off" disabled><svg class="s13"><use href="#s-cross"/></svg>Cross</button>
      <button class="row17 d-flex align-items-center"><svg class="s13"><use href="#s-con"/></svg>Contour</button>
      <button class="row17 d-flex align-items-center"><svg class="s13"><use href="#s-iso"/></svg>Isocline</button>
    </div>
    <div>
      <button class="row17 d-flex align-items-center"><svg class="s13"><use href="#s-der"/></svg>Derived</button>
      <button class="row17 d-flex align-items-center off" disabled><svg class="s13"><use href="#s-spl"/></svg>Split</button>
      <button class="row17 d-flex align-items-center"><svg class="s13"><use href="#s-ip"/></svg>Intersection Point</button>
    </div>
  </div><div class="grpname">Curves</div></div>
  <div class="grp g208"><div class="grpbody d-flex ps-1">
    <button class="big w40 d-flex flex-column align-items-center"><svg class="s28"><use href="#blue"/></svg>BlueSurf</button>
    <button class="big w42 d-flex flex-column align-items-center"><svg class="s28"><use href="#bound"/></svg>Bounded</button>
    <button class="big w40 d-flex flex-column align-items-center"><svg class="s28"><use href="#redef"/></svg>Redefine</button>
    <button class="big w38 d-flex flex-column align-items-center"><svg class="s28"><use href="#offs"/></svg>Offset</button>
    <div>
      <button class="row17 d-flex align-items-center"><svg class="s13"><use href="#s-copy"/></svg>Copy</button>
      <button class="row17 d-flex align-items-center"><svg class="s13"><use href="#s-rul"/></svg>Ruled</button>
    </div>
  </div><div class="grpname">Surfaces</div></div>
  <div class="grp g211"><div class="grpbody d-flex ps-1">
    <button class="big w40 d-flex flex-column align-items-center"><svg class="s28"><use href="#inter"/></svg>Intersect</button>
    <button class="big w38 d-flex flex-column align-items-center off" disabled><svg class="s28"><use href="#repl"/></svg><span>Replace<br>Face</span></button>
    <div class="c47">
      <button class="row17 d-flex align-items-center"><svg class="s13"><use href="#s-trim"/></svg>Trim</button>
      <button class="row17 d-flex align-items-center"><svg class="s13"><use href="#s-extend"/></svg>Extend</button>
      <button class="row17 d-flex align-items-center"><svg class="s13"><use href="#s-sp2"/></svg>Split</button>
    </div>
    <div>
      <button class="row17 d-flex align-items-center"><svg class="s13"><use href="#s-sti"/></svg>Stitched<svg class="s6 ms-1"><use href="#car"/></svg></button>
      <button class="row17 d-flex align-items-center"><svg class="s13"><use href="#s-par"/></svg>Parting Split<svg class="s6 ms-1"><use href="#car"/></svg></button>
    </div>
  </div><div class="grpname">Modify Surfaces</div></div>
</section>

<main class="d-flex flex-grow-1 overflow-hidden">
  <aside class="side d-flex flex-column align-items-start">
    <button class="lead-item d-flex flex-column align-items-start"><svg class="s15"><use href="#lib"/></svg><span class="vert">Feature Library</span></button>
    <div class="tools d-flex flex-column">
      <button aria-label="Family of parts"><svg class="s15"><use href="#l2"/></svg></button>
      <button aria-label="Sensors"><svg class="s15"><use href="#l3"/></svg></button>
      <button aria-label="Playback"><svg class="s15"><use href="#l4"/></svg></button>
      <button aria-label="Simulation"><svg class="s15"><use href="#l5"/></svg></button>
      <button aria-label="Simulation results"><svg class="s15"><use href="#l6"/></svg></button>
      <button aria-label="Layers"><svg class="s15"><use href="#l7"/></svg></button>
    </div>
  </aside>

  <div class="d-flex flex-column flex-grow-1">
    <div class="doctabs d-flex justify-content-between align-items-stretch">
      <div class="doctab d-flex align-items-center"><svg class="s13"><use href="#part"/></svg><span class="flex-grow-1">Control Arm</span><button aria-label="Close tab"><svg width="8" height="8"><path d="M1 1l6 6M7 1L1 7" stroke="#fff" stroke-width="1.500"/></svg></button></div>
      <div class="d-flex align-items-center gap-1 pe-1">
        <button aria-label="Previous tab"><svg width="6" height="8"><path d="M4.500 1v6L2 4z" fill="none" stroke="#777"/></svg></button>
        <button aria-label="Next tab"><svg width="6" height="8"><path d="M2 1v6l2.500-3z" fill="none" stroke="#777"/></svg></button>
        <button aria-label="Close all"><svg width="8" height="8"><path d="M1 1l6 6M7 1L1 7" stroke="#555" stroke-width="1.300"/></svg></button>
      </div>
    </div>

    <div class="view position-relative flex-grow-1">
      <svg class="position-absolute top-0 start-0 w-100 h-100" viewBox="22 129 1236 575" role="img" aria-label="Control arm model">
        <defs>
          <filter id="b2f" x="-20%" y="-20%" width="140%" height="140%"><feGaussianBlur stdDeviation="2"/></filter>
          <filter id="b4f" x="-20%" y="-20%" width="140%" height="140%"><feGaussianBlur stdDeviation="4"/></filter>
          <path id="arm" d="M213 425C216 425 218 424 220 422C265 370 325 304 400 262C470 219 540 191 613 191C690 191 755 216 813 253C865 288 915 350 956 425L968 515L840 520L836 463C825 425 795 380 757 343C722 311 680 287 627 279C580 273 532 279 480 298C443 313 405 336 367 363C338 384 308 410 283 432C268 447 243 457 220 458C212 459 208 458 202 459C199 461 198 463 195 463H160C148 461 141 453 141 442C142 431 149 423 160 422H193C198 422 198 425 202 426Z"/>
          <clipPath id="armc"><use href="#arm"/></clipPath>
          <path id="hub" d="M838 461C850 440 870 429 890 430C922 433 940 470 957 470L956 425L957 400C960 385 962 377 967 368C973 362 978 358 983 353L997 339C1008 331 1024 333 1033 338C1045 346 1050 360 1052 374L1042 530L1032 535L1003 562C980 580 948 593 913 593C875 593 848 577 830 553C817 537 811 523 811 508C812 485 824 470 838 461Z"/>
          <clipPath id="hubc"><use href="#hub"/></clipPath>
          <linearGradient id="hole1" x1="0" y1="0" x2="1" y2="0"><stop offset="0" stop-color="#69639a"/><stop offset=".45" stop-color="#67618f"/><stop offset="1" stop-color="#a19dc8"/></linearGradient>
          <linearGradient id="post" x1="0" y1="0" x2="0" y2="1"><stop offset="0" stop-color="#8d8bcb"/><stop offset=".25" stop-color="#8a87c6"/><stop offset=".5" stop-color="#a3a0e6"/><stop offset=".78" stop-color="#8582bf"/><stop offset="1" stop-color="#8d8bcb"/></linearGradient>
          <linearGradient id="hole2" x1="0" y1="0" x2="0" y2="1"><stop offset="0" stop-color="#7570a8"/><stop offset=".4" stop-color="#9a95d6"/><stop offset=".6" stop-color="#928dcc"/><stop offset=".8" stop-color="#a9a5e2"/><stop offset="1" stop-color="#8580bb"/></linearGradient>
          <linearGradient id="valley" x1="0" y1="0" x2="1" y2="1"><stop offset="0" stop-color="#8885bf"/><stop offset=".4" stop-color="#625c8c"/><stop offset="1" stop-color="#8481ad"/></linearGradient>
          <linearGradient id="edge" gradientUnits="userSpaceOnUse" x1="620" y1="0" x2="800" y2="0"><stop offset="0" stop-color="#554f7e" stop-opacity="0"/><stop offset="1" stop-color="#554f7e"/></linearGradient>
        </defs>
        <use href="#arm" fill="#8d8bcb" stroke="#5d588c"/>
        <g clip-path="url(#armc)" fill="none">
          <path d="M222 440C252 425 270 385 325 332C390 282 470 231 540 214C620 196 690 206 750 236C830 276 890 350 950 460" stroke="#a19fe2" stroke-width="12" filter="url(#b4f)"/>
          <path d="M240 410C290 350 360 295 420 262C480 228 550 204 613 203C690 204 750 228 800 265C860 310 905 380 945 450" stroke="#a19fe2" stroke-width="5" filter="url(#b2f)"/>
          <path d="M613 189C690 189 755 214 815 251C867 286 917 348 958 423L966 500" stroke="url(#edge)" stroke-width="18" filter="url(#b4f)"/>
          <path d="M613 190C690 190 755 215 814 252C866 287 916 349 957 424" stroke="url(#edge)" stroke-width="6" filter="url(#b2f)"/>
          <path d="M200 463L225 461C262 455 280 440 320 404C400 337 470 295 547 280C630 268 700 295 757 343C800 387 825 420 838 470" stroke="#4b4475" stroke-width="7" filter="url(#b2f)"/>
          <path d="M141 464H202M141 420H200" stroke="#57508a" stroke-width="4" filter="url(#b2f)"/>
          <path d="M192 427V458" stroke="#7572b3" stroke-width="3" filter="url(#b2f)"/>
        </g>
        <ellipse cx="159" cy="444" rx="9" ry="9.500" fill="#65619a"/>
        <ellipse cx="162.500" cy="442.500" rx="4.500" ry="6.500" fill="#fff" transform="rotate(-35 162.500 442.500)"/>

        <use href="#hub" fill="#8d8bcb"/>
        <g clip-path="url(#hubc)">
          <path d="M950 405H1052V520H960L950 460Z" fill="url(#post)"/>
          <path d="M1032 520L1045 535L960 600H913C970 590 1010 560 1032 500Z" fill="#615b92" filter="url(#b4f)"/>
          <path d="M843 459C855 441 872 434 890 436C918 443 935 485 966 490L968 514C950 522 925 510 912 487C900 470 885 455 862 456Z" fill="url(#valley)" filter="url(#b2f)"/>
          <path d="M836 450C850 428 875 424 898 432C925 444 940 480 962 488" fill="none" stroke="#a09de0" stroke-width="9" filter="url(#b2f)"/>
          <path d="M822 484C840 463 865 458 885 469C905 480 910 503 935 518C945 523 958 524 966 517" fill="none" stroke="#a3a1e3" stroke-width="7" filter="url(#b2f)"/>
          <path d="M838 461C814 474 807 505 816 530C832 573 875 594 913 594C950 593 980 582 1010 560" fill="none" stroke="#4f4979" stroke-width="6" filter="url(#b2f)"/>
        </g>
        <path d="M838 461C824 470 812 485 811 508C811 523 817 537 830 553C848 577 875 593 913 593C948 593 980 580 1003 562L1034 534" fill="none" stroke="#544e80" stroke-width="1"/>
        <path d="M956 425C954 452 960 475 967 500V513M956 430V400C960 385 962 377 967 368" fill="none" stroke="#3d3762" stroke-width="1"/>
        <g clip-path="url(#hubc)">
          <path d="M975 362L997 339C1012 330 1037 336 1045 352L1056 385L1036 395C1030 370 1015 352 985 354Z" fill="#615b8f"/>
          <path d="M983 354C1004 338 1027 352 1034 372L1040 392" fill="none" stroke="#9a97d8" stroke-width="6"/>
          <path d="M975 362C990 350 1010 350 1020 362C1031 374 1034 392 1026 402L1018 400C1022 380 1008 364 985 366Z" fill="#6b659c" filter="url(#b2f)"/>
          <path d="M962 388C972 364 1000 358 1015 378C1020 388 1021 396 1020 408" fill="none" stroke="#9c99dc" stroke-width="4" filter="url(#b2f)"/>
        </g>
        <path d="M967 368L997 339C1012 330 1037 336 1045 352L1052 374" fill="none" stroke="#544e80"/>
        <ellipse cx="989" cy="390" rx="12" ry="13.500" fill="#5f5a8e" transform="rotate(-25 989 390)"/>
        <path d="M988 378C990 390 995 396 1001 397C1003 388 1000 378 988 378Z" fill="#a09dd9"/>
        <path d="M982 402C990 403 996 401 1000 397L990 392Z" fill="#807bb3"/>

        <ellipse cx="866" cy="520" rx="30" ry="33" fill="url(#hole1)" stroke="#5f598f" stroke-width="1" transform="rotate(-35 866 520)"/>

        <path d="M1015.500 407L1069 362L1089 493L1035 540Z" fill="#60578f" stroke="#3f3765"/>
        <path d="M1040 400C1032 410 1030 425 1029 445L1030 455L1028 463C1028 475 1033 495 1038 497L1044 504L1050 508L1056 503L1058 505L1062 500L1063 505C1068 500 1071 496 1070 488L1074 484C1076 478 1079 470 1076 460L1078 452L1074 440L1076 432L1072 424C1074 418 1072 408 1068 405C1064 404 1067 396 1062 390L1059 392L1057 389L1054 393C1048 392 1048 400 1051 405L1056 407L1060 411M1040 400L1043 405L1042 413" fill="none" stroke="#3f3667" stroke-width=".8"/>
        <ellipse cx="1053" cy="448" rx="15" ry="36" fill="url(#hole2)" stroke="#362d5c"/>

        <path d="M247.500 181v13l3-2.600 2.200 4.600 2-1-2.200-4.500 4-.2z" fill="#fff" stroke="#444" stroke-width=".9"/>

        <g stroke="#9a9a9e" stroke-width=".8" fill="#fcfcfd">
          <path d="M1176 641L1195 629L1229 628L1215 639Z"/><path d="M1176 641L1215 639L1221 681L1183 679Z"/><path d="M1215 639L1229 628L1234 665L1221 681Z" fill="#eeeef0"/>
        </g>
        <path d="M1206.500 653L1204.500 635" stroke="#7a78c8"/><path d="M1206.500 653H1222" stroke="#d8708f"/><path d="M1207 652l7-5" stroke="#9ad87a"/><circle cx="1206.500" cy="653" r="2" fill="#d8d232"/>
        <text x="1198.500" y="664" font-size="9" text-anchor="middle" fill="#4a4a4e">FRONT</text>
        <text x="1204" y="635" font-size="5" text-anchor="middle" fill="#77778f" transform="rotate(180 1204 633.500)">TOP</text>
        <text x="1225" y="655" font-size="5" text-anchor="middle" fill="#66666c" transform="rotate(-50 1225 653)">RIGHT</text>
      </svg>

      <div class="position-relative">
        <div class="grip d-flex justify-content-center align-items-center"><svg width="32" height="3"><path d="M0 1.500h32" stroke="#3b5f94" stroke-width="2" stroke-dasharray="2 1.500"/></svg></div>
        <div class="tree">
          <div class="trow d-flex align-items-center"><span class="node d-flex align-items-center"><svg class="s11"><use href="#part"/></svg>Control Arm</span></div>
          <div class="trow d-flex align-items-center i1"><input type="checkbox" id="n1"><label class="node dim d-flex align-items-center" for="n1"><svg class="s11"><use href="#t-base"/></svg>Base</label></div>
          <div class="trow d-flex align-items-center i2"><span class="node d-flex align-items-center"><svg class="s11"><use href="#t-mat"/></svg>Material (None)</span></div>
          <div class="trow d-flex align-items-center i3"><svg class="pm"><use href="#plus"/></svg><input type="checkbox" id="n2"><label class="node dim d-flex align-items-center" for="n2"><svg class="s11"><use href="#t-pl"/></svg>Base Reference Planes</label></div>
          <div class="trow d-flex align-items-center i3"><svg class="pm near"><use href="#minus"/></svg><span class="node strong sync d-flex align-items-center"><svg class="s11"><use href="#t-sync"/></svg>Synchronous<svg class="ms-auto me-1" width="15" height="9"><path d="M14 0v8L0 4.500z" fill="#fff8e6"/></svg></span></div>
          <div class="trow d-flex align-items-center i4"><svg class="pm near"><use href="#minus"/></svg><input type="checkbox" id="n3" checked><label class="node strong d-flex align-items-center" for="n3"><svg class="s11"><use href="#t-feat"/></svg>Features</label></div>
          <div class="trow d-flex align-items-center i5"><input type="checkbox" id="n4" checked><label class="node strong two d-flex align-items-center" for="n4"><svg class="s11"><use href="#t-info"/></svg><svg class="s11"><use href="#t-surf"/></svg>Cylindrical surface 0</label></div>
          <div class="trow d-flex align-items-center i5"><input type="checkbox" id="n5" checked><label class="node strong two d-flex align-items-center" for="n5"><svg class="s11"><use href="#t-info"/></svg><svg class="s11"><use href="#t-surf"/></svg>Planar surface 0</label></div>
          <div class="trow d-flex align-items-center i5"><input type="checkbox" id="n6" checked><label class="node strong d-flex align-items-center" for="n6"><svg class="s11"><use href="#t-set"/></svg>Face Set 6</label></div>
        </div>
      </div>
    </div>
  </div>

  <aside class="side right d-flex flex-column align-items-end">
    <a class="lead-item d-flex flex-column align-items-center" href="#"><svg class="s15"><use href="#help"/></svg><span class="vert">Learn Solid Edge</span></a>
    <div class="tools d-flex flex-column">
      <a href="#" aria-label="YouTube"><svg class="s15" viewBox="0 0 15 15"><path d="M0 8h15v7H0z" fill="#b4202a"/><text x="7.500" y="7" font-size="7" font-weight="700" text-anchor="middle" fill="#333" font-family="Open Sans">You</text><text x="7.500" y="14" font-size="6" font-weight="700" text-anchor="middle" fill="#fff" font-family="Open Sans">Tube</text></svg></a>
      <a href="#" aria-label="Facebook"><svg class="s15"><use href="#fb"/></svg></a>
      <a href="#" aria-label="Community"><svg class="s15"><use href="#cardi"/></svg></a>
    </div>
  </aside>
</main>

<footer class="status d-flex justify-content-end align-items-center flex-shrink-0">
  <input class="find" type="text" placeholder="Find a command" aria-label="Find a command">
  <button aria-label="Go"><svg class="s13"><use href="#b1"/></svg></button>
  <button class="ms-1" aria-label="Zoom area"><svg class="s13"><use href="#b2"/></svg></button>
  <button aria-label="Zoom"><svg class="s13"><use href="#b3"/></svg></button>
  <button aria-label="Fit view"><svg class="s13"><use href="#b4"/></svg></button>
  <button aria-label="Pan"><svg class="s13"><use href="#b5"/></svg></button>
  <button aria-label="Rotate"><svg class="s13"><use href="#b6"/></svg></button>
  <button aria-label="Sketch view"><svg class="s13"><use href="#b7"/></svg></button>
  <button aria-label="View orientation"><svg class="s13"><use href="#b8"/></svg></button>
  <button aria-label="View styles"><svg class="s13"><use href="#b9"/></svg></button>
  <button aria-label="Zoom out"><svg class="s13"><use href="#zo"/></svg></button>
  <input class="zoomer" type="range" min="0" max="100" value="73" aria-label="Zoom level">
  <button aria-label="Zoom in"><svg class="s13"><use href="#zi"/></svg></button>
  <button aria-label="Record"><svg class="s13"><use href="#rec"/></svg></button>
  <button class="ms-1" aria-label="Upload"><svg class="s13"><use href="#up"/></svg></button>
</footer>
<script src="https://cdn.jsdelivr.net/npm/bootstrap@5.3.0/dist/js/bootstrap.bundle.min.js"></script>
</body>
</html>
